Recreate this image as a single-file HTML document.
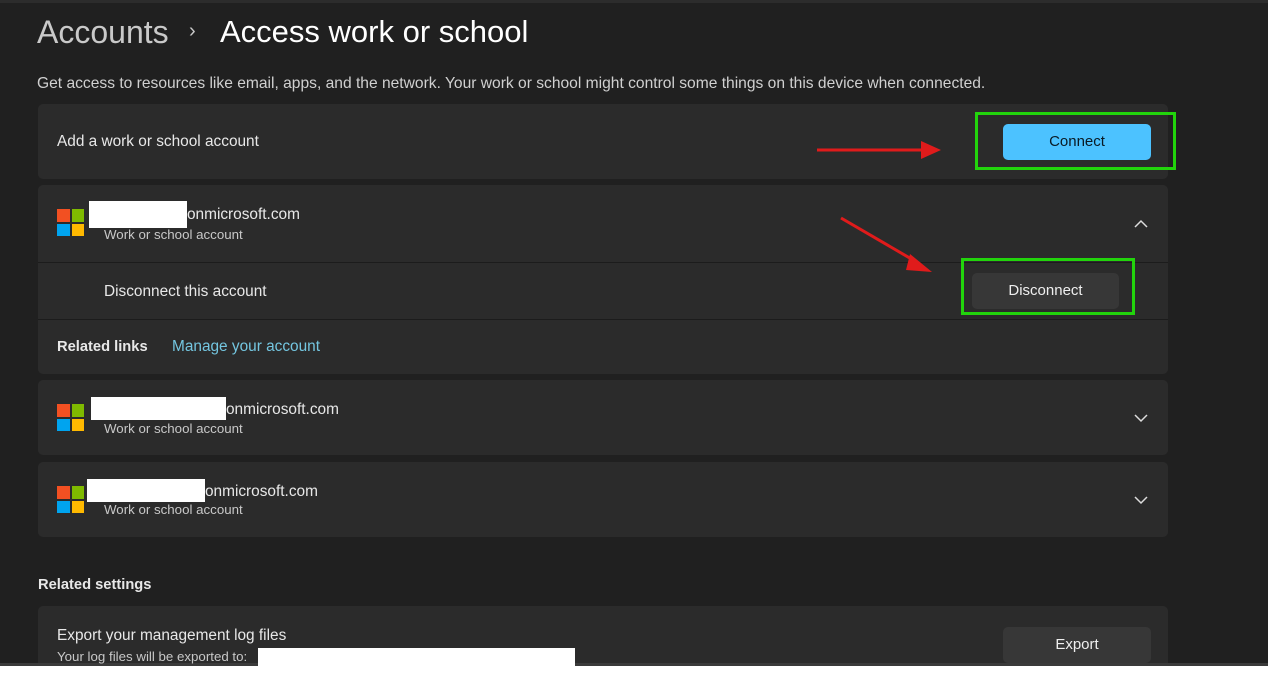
<!DOCTYPE html>
<html><head><meta charset="utf-8"><style>
*{margin:0;padding:0;box-sizing:border-box}
body{width:1268px;height:682px;background:#fff;position:relative;overflow:hidden;font-family:"Liberation Sans",sans-serif;color:#fff}
.bg{position:absolute;left:0;top:0;width:1268px;height:663px;background:#202020;border-top:3px solid #2c2c2c}
.strip{position:absolute;left:0;top:663px;width:1268px;height:3px;background:#3a3a3a}
.a{position:absolute;white-space:nowrap}
.card{position:absolute;left:38px;width:1130px;background:#2b2b2b;border-radius:5px}
.t{font-size:15.4px;color:#e8e8e8}
.s{font-size:13.3px;color:#c8c8c8}
.ms{position:absolute;width:27px;height:27px}
.ms i{position:absolute;width:12.5px;height:12.5px}
.btn{position:absolute;border-radius:5px;font-size:15px;text-align:center}
.wh{position:absolute;background:#fff}
</style></head><body>
<div class="bg"></div>
<div class="strip"></div>
<div class="a" style="left:37px;top:14px;font-size:32px;color:#c9c9c9">Accounts</div>
<div class="a" style="left:189px;top:20px;font-size:20px;color:#c9c9c9">›</div>
<div class="a" style="left:220px;top:14px;font-size:31px;color:#fff">Access work or school</div>
<div class="a" style="left:37px;top:75px;font-size:15.6px;color:#d0d0d0">Get access to resources like email, apps, and the network. Your work or school might control some things on this device when connected.</div>

<div class="card" style="top:104px;height:75px"></div>
<div class="a t" style="left:57px;top:133px">Add a work or school account</div>
<div class="btn" style="left:1003px;top:124px;width:148px;height:36px;background:#4cc2ff;color:#0a1a24;line-height:36px">Connect</div>
<div class="a" style="left:975px;top:112px;width:201px;height:58px;border:3px solid #22d40c"></div>
<svg class="a" style="left:815px;top:138px" width="130" height="26"><line x1="2" y1="12" x2="110" y2="12" stroke="#e01b1b" stroke-width="3"/><polygon points="106,3 126,12 106,21" fill="#e01b1b"/></svg>

<div class="card" style="top:185px;height:189px"></div>
<div class="a" style="left:38px;top:262px;width:1130px;height:1px;background:#1c1c1c"></div>
<div class="a" style="left:38px;top:319px;width:1130px;height:1px;background:#1c1c1c"></div>
<div class="ms" style="left:57px;top:209px"><i style="left:0;top:0;background:#f25022"></i><i style="left:14.5px;top:0;background:#7fba00"></i><i style="left:0;top:14.5px;background:#00a4ef"></i><i style="left:14.5px;top:14.5px;background:#ffb900"></i></div>
<div class="wh" style="left:89px;top:201px;width:98px;height:27px"></div>
<div class="a t" style="left:187px;top:206px">onmicrosoft.com</div>
<div class="a s" style="left:104px;top:227px">Work or school account</div>
<svg class="a" style="left:1133px;top:218px" width="16" height="12"><polyline points="2,9 8,3 14,9" fill="none" stroke="#ddd" stroke-width="1.5"/></svg>
<svg class="a" style="left:838px;top:214px" width="100" height="62"><line x1="3" y1="4" x2="82" y2="50" stroke="#e01b1b" stroke-width="3"/><polygon points="72,40 94,58 68,56" fill="#e01b1b"/></svg>
<div class="a t" style="left:104px;top:283px">Disconnect this account</div>
<div class="btn" style="left:972px;top:273px;width:147px;height:36px;background:#373737;color:#eee;line-height:36px">Disconnect</div>
<div class="a" style="left:961px;top:258px;width:174px;height:57px;border:3px solid #22d40c"></div>
<div class="a" style="left:57px;top:339px;font-size:14.7px;font-weight:bold;color:#e8e8e8">Related links</div>
<div class="a" style="left:172px;top:338px;font-size:15.4px;color:#74c6e0">Manage your account</div>

<div class="card" style="top:380px;height:75px"></div>
<div class="ms" style="left:57px;top:404px"><i style="left:0;top:0;background:#f25022"></i><i style="left:14.5px;top:0;background:#7fba00"></i><i style="left:0;top:14.5px;background:#00a4ef"></i><i style="left:14.5px;top:14.5px;background:#ffb900"></i></div>
<div class="wh" style="left:91px;top:397px;width:135px;height:23px"></div>
<div class="a t" style="left:226px;top:401px">onmicrosoft.com</div>
<div class="a s" style="left:104px;top:421px">Work or school account</div>
<svg class="a" style="left:1133px;top:412px" width="16" height="12"><polyline points="2,3 8,9 14,3" fill="none" stroke="#ddd" stroke-width="1.5"/></svg>

<div class="card" style="top:462px;height:75px"></div>
<div class="ms" style="left:57px;top:486px"><i style="left:0;top:0;background:#f25022"></i><i style="left:14.5px;top:0;background:#7fba00"></i><i style="left:0;top:14.5px;background:#00a4ef"></i><i style="left:14.5px;top:14.5px;background:#ffb900"></i></div>
<div class="wh" style="left:87px;top:479px;width:118px;height:23px"></div>
<div class="a t" style="left:205px;top:483px">onmicrosoft.com</div>
<div class="a s" style="left:104px;top:502px">Work or school account</div>
<svg class="a" style="left:1133px;top:494px" width="16" height="12"><polyline points="2,3 8,9 14,3" fill="none" stroke="#ddd" stroke-width="1.5"/></svg>

<div class="a" style="left:38px;top:577px;font-size:14.7px;font-weight:bold;color:#e8e8e8">Related settings</div>
<div class="card" style="top:606px;height:57px;border-radius:5px 5px 0 0"></div>
<div class="a t" style="left:57px;top:627px">Export your management log files</div>
<div class="a s" style="left:57px;top:649px">Your log files will be exported to:</div>
<div class="wh" style="left:258px;top:648px;width:317px;height:34px"></div>
<div class="btn" style="left:1003px;top:627px;width:148px;height:36px;background:#373737;color:#eee;line-height:36px">Export</div>
</body></html>
